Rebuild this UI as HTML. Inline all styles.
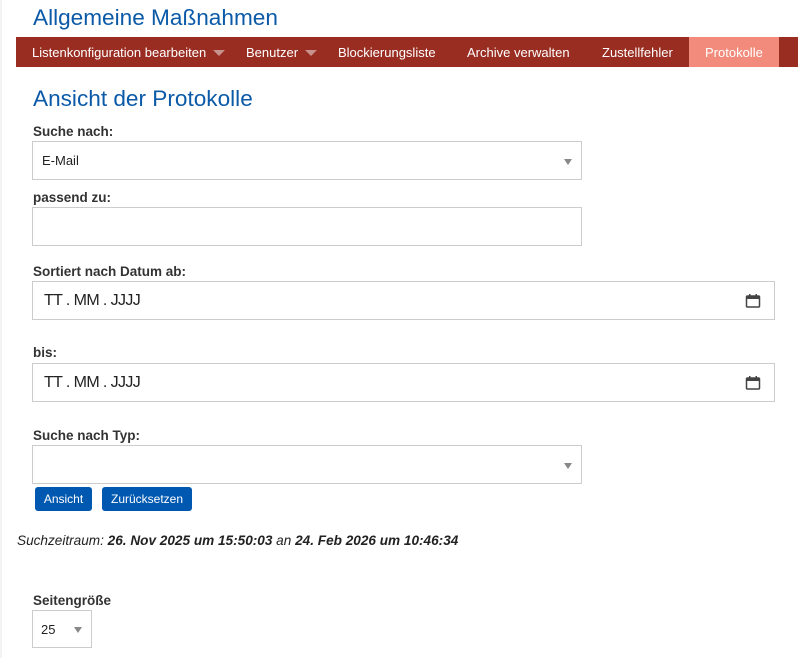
<!DOCTYPE html>
<html><head><meta charset="utf-8"><style>
*{box-sizing:border-box;margin:0;padding:0}
body{width:798px;height:658px;background:#fff;font-family:"Liberation Sans",sans-serif;position:relative;overflow:hidden;color:#333}
.a{position:absolute}
h1,h2{font-weight:normal;color:#0b5aa8;font-size:22.6px;position:absolute;left:33px}
.nav{left:16px;top:37px;width:782px;height:30px;background:#992d22;color:#fff;font-size:13px}
.nav span{position:absolute;top:8px}
.tri{display:inline-block;width:0;height:0;border-left:6px solid transparent;border-right:6px solid transparent;border-top:6px solid #c8928c;margin-left:7px;vertical-align:1px}
.lbl{font-weight:bold;font-size:13.5px;color:#333;left:33px}
.box{border:1px solid #ccc;background:#fff;left:32px}
.sel:after{content:"";position:absolute;right:9px;top:50%;margin-top:-2px;border-left:4px solid transparent;border-right:4px solid transparent;border-top:6px solid #888}
.dt{font-size:16px;color:#222;position:absolute;left:11px;top:10px;letter-spacing:-0.6px}
.cal{position:absolute;right:13px;top:11px}
.btn{background:#0058b0;color:#fff;font-size:12px;border-radius:3px;height:24px;top:487px;text-align:center;line-height:24px}
</style></head><body>
<div class="a" style="left:0;top:0;width:2px;height:658px;background:#f3f3f3"></div>
<h1 style="top:5px">Allgemeine Maßnahmen</h1>
<div class="a nav">
<span style="left:16px">Listenkonfiguration bearbeiten<i class="tri"></i></span>
<span style="left:230px">Benutzer<i class="tri"></i></span>
<span style="left:322px">Blockierungsliste</span>
<span style="left:451px">Archive verwalten</span>
<span style="left:586px">Zustellfehler</span>
<div class="a" style="left:673px;top:0;width:90px;height:30px;background:#f28b7b"></div>
<span style="left:689px">Protokolle</span>
</div>
<h2 style="top:86px">Ansicht der Protokolle</h2>
<div class="a lbl" style="top:124px">Suche nach:</div>
<div class="a box sel" style="top:141px;width:550px;height:39px"><span class="a" style="left:9px;top:11px;font-size:13px;color:#222">E-Mail</span></div>
<div class="a lbl" style="top:190px">passend zu:</div>
<div class="a box" style="top:207px;width:550px;height:39px"></div>
<div class="a lbl" style="top:264px">Sortiert nach Datum ab:</div>
<div class="a box" style="top:281px;width:743px;height:39px"><span class="dt">TT . MM . JJJJ</span>
<svg class="cal" width="16" height="16" viewBox="0 0 16 16"><rect x="1.5" y="3" width="13" height="11" fill="none" stroke="#444" stroke-width="1.5" rx="1"/><rect x="1.5" y="3" width="13" height="3" fill="#444"/><rect x="4" y="1" width="1.5" height="3" fill="#444"/><rect x="10.5" y="1" width="1.5" height="3" fill="#444"/></svg></div>
<div class="a lbl" style="top:345px">bis:</div>
<div class="a box" style="top:363px;width:743px;height:39px"><span class="dt">TT . MM . JJJJ</span>
<svg class="cal" width="16" height="16" viewBox="0 0 16 16"><rect x="1.5" y="3" width="13" height="11" fill="none" stroke="#444" stroke-width="1.5" rx="1"/><rect x="1.5" y="3" width="13" height="3" fill="#444"/><rect x="4" y="1" width="1.5" height="3" fill="#444"/><rect x="10.5" y="1" width="1.5" height="3" fill="#444"/></svg></div>
<div class="a lbl" style="top:428px">Suche nach Typ:</div>
<div class="a box sel" style="top:445px;width:550px;height:39px"></div>
<div class="a btn" style="left:35px;width:57px">Ansicht</div>
<div class="a btn" style="left:102px;width:90px">Zurücksetzen</div>
<div class="a" style="left:17px;top:533px;font-size:13.6px;font-style:italic;color:#222">Suchzeitraum: <b>26. Nov 2025 um 15:50:03</b> an <b>24. Feb 2026 um 10:46:34</b></div>
<div class="a lbl" style="top:593px">Seitengröße</div>
<div class="a box sel" style="top:610px;width:60px;height:38px"><span class="a" style="left:8px;top:11px;font-size:13px;color:#222">25</span></div>
</body></html>
